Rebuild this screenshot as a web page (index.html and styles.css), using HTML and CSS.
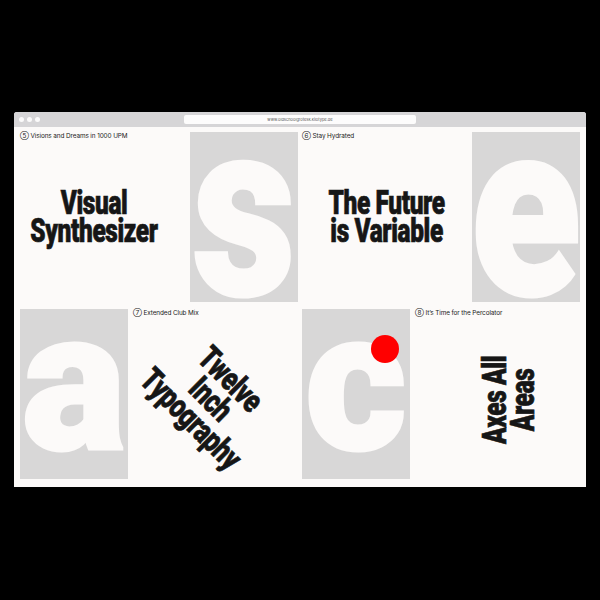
FILE: index.html
```html
<!DOCTYPE html>
<html>
<head>
<meta charset="utf-8">
<link rel="stylesheet" href="styles.css">
</head>
<body>
<div class="page">
  <div class="window">
    <div class="titlebar">
      <div class="dots"><span class="dot"></span><span class="dot"></span><span class="dot"></span></div>
      <div class="address">www.oldschoolgrotesk.kilotype.de</div>
      <div></div>
    </div>
    <div class="content">
      <div class="cell">
        <div class="text t1">
          <div class="label">⑤ Visions and Dreams in 1000 UPM</div>
          <div class="stage"><div class="head">Visual<br>Synthesizer</div></div>
        </div>
        <div class="tile"><span class="glyph big">s</span></div>
      </div>
      <div class="cell">
        <div class="text">
          <div class="label">⑥ Stay Hydrated</div>
          <div class="stage"><div class="head">The Future<br>is Variable</div></div>
        </div>
        <div class="tile"><span class="glyph big">e</span></div>
      </div>
      <div class="cell">
        <div class="tile"><span class="glyph small">a</span></div>
        <div class="text right">
          <div class="label">⑦ Extended Club Mix</div>
          <div class="stage"><div class="head diag">Twelve<br>Inch<br>Typography</div></div>
        </div>
      </div>
      <div class="cell">
        <div class="tile"><span class="glyph small">c</span><span class="dotred"></span></div>
        <div class="text right">
          <div class="label">⑧ It’s Time for the Percolator</div>
          <div class="stage"><div class="head vert">Axes All<br>Areas</div></div>
        </div>
      </div>
    </div>
  </div>
</div>
</body>
</html>
```
FILE: styles.css
```css
html, body { margin: 0; padding: 0; }
body { background: #000; }
.page {
  width: 600px;
  height: 600px;
  box-sizing: border-box;
  padding: 112px 14px 0;
  background: #000;
  overflow: hidden;
}
.window {
  width: 572px;
  height: 375px;
  background: #fcfaf9;
  border-radius: 3px 3px 0 0;
  overflow: hidden;
}
.titlebar {
  height: 15px;
  background: #d6d5d7;
  display: grid;
  grid-template-columns: 1fr 232px 1fr;
  align-items: center;
}
.dots { display: flex; gap: 3px; padding-left: 5px; }
.dot { width: 5px; height: 5px; border-radius: 50%; background: #fcfbfb; }
.address {
  height: 9px;
  background: #fdfcfc;
  border-radius: 2px;
  font-family: "Inter", "Liberation Sans", sans-serif;
  font-size: 4px;
  line-height: 9px;
  color: #555;
  text-align: center;
}
.content {
  display: grid;
  grid-template-columns: 278px 278px;
  grid-auto-rows: 170px;
  column-gap: 4px;
  row-gap: 7px;
  padding: 5px 6px;
}
.cell { display: flex; min-width: 0; }
.text {
  flex: 1;
  display: flex;
  flex-direction: column;
  min-width: 0;
}
.text.right { padding-left: 5px; }
.t1 { padding-right: 22px; }
.label {
  font-family: "Inter", "Liberation Sans", sans-serif;
  font-size: 6.4px;
  line-height: 8px;
  color: #222;
  letter-spacing: -0.1px;
  white-space: nowrap;
}
.stage {
  flex: 1;
  display: flex;
  align-items: center;
  justify-content: center;
  padding-bottom: 8px;
}
.head {
  font-family: "Roboto", "Liberation Sans", sans-serif;
  font-weight: 900;
  font-size: 33px;
  line-height: 28px;
  color: #161616;
  -webkit-text-stroke: 0.7px #161616;
  text-align: center;
  white-space: nowrap;
  letter-spacing: -0.5px;
  transform: scaleX(0.74);
}
.head.diag { transform: translate(-5px, 5px) rotate(45deg) scaleX(0.74); }
.head.vert { transform: translate(12px, 6px) rotate(-90deg) scaleX(0.74); }
.tile {
  position: relative;
  width: 108px;
  flex: none;
  background: #d8d7d7;
  overflow: hidden;
  display: flex;
  flex-direction: column;
  align-items: center;
}
.glyph {
  font-family: "Roboto", "Liberation Sans", sans-serif;
  font-weight: 900;
  line-height: 1;
  color: #fcfaf9;
  -webkit-text-stroke: 3px #fcfaf9;
}
.glyph.big { font-size: 246px; margin-top: -44px; transform: scaleX(0.82); }
.glyph.small { font-size: 196px; margin-top: -25px; }
.dotred {
  position: absolute;
  left: 69px;
  top: 26px;
  width: 28px;
  height: 28px;
  border-radius: 50%;
  background: #ff0000;
}
```
